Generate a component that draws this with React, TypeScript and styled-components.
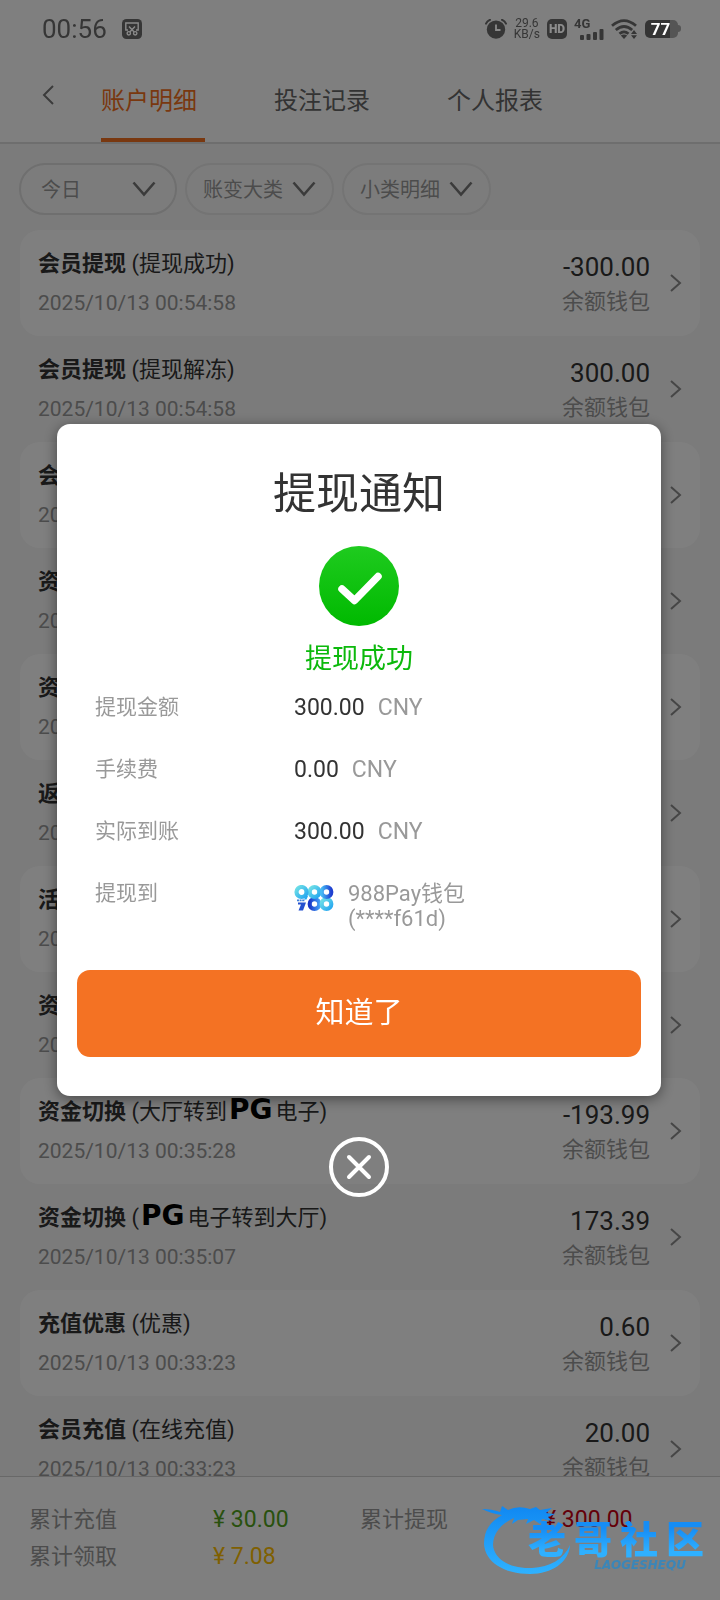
import React from "react";
import styled, { createGlobalStyle } from "styled-components";

const Global = createGlobalStyle`
  * { box-sizing: border-box; }
  body {
    margin: 0;
    background: #f7f7f7;
    font-family: Roboto, "Noto Sans CJK SC", sans-serif;
    color: #333;
  }
  button, select { font: inherit; color: inherit; }
  h2, p, ul, dl, dd { margin: 0; padding: 0; }
`;

const Page = styled.div`
  height: 100vh;
  display: flex;
  flex-direction: column;
  overflow: hidden;
`;

/* ---------- status bar ---------- */
const StatusBar = styled.header`
  position: relative;
  z-index: 3;
  flex: none;
  height: 57px;
  padding: 0 39px 0 42px;
  display: flex;
  align-items: center;
  gap: 7px;
  color: #363636;
`;
const Clock = styled.time`
  font-size: 26px;
  line-height: 30px;
  margin-right: 8px;
`;
const Spacer = styled.span`
  flex: 1;
`;
const Speed = styled.span`
  display: grid;
  justify-items: center;
  font-size: 12px;
  line-height: 11px;
`;
const Battery = styled.span`
  display: flex;
  align-items: center;
  justify-content: center;
  width: 33px;
  height: 18px;
  padding-right: 2px;
  border-radius: 5px;
  background: linear-gradient(90deg, #343434 77%, #555 77%);
  color: #fff;
  font-size: 17px;
  font-weight: 700;
  line-height: 18px;
`;
const BatteryCap = styled.i`
  width: 3px;
  height: 7px;
  margin-left: -7px;
  border-radius: 0 3px 3px 0;
  background: #555;
`;
const HdBox = styled.span`
  display: grid;
  place-items: center;
  width: 20px;
  height: 20px;
  border-radius: 5px;
  background: #363636;
  color: #8c8c8c;
  font-size: 12px;
  font-weight: 900;
  line-height: 20px;
`;
const Signal = styled.span`
  display: grid;
  width: 30px;
  height: 20px;
  font-size: 13px;
  font-weight: 700;
  line-height: 10px;
  svg { justify-self: end; }
`;

/* ---------- navigation ---------- */
const Nav = styled.nav`
  flex: none;
  display: flex;
  align-items: flex-start;
  padding-left: 36px;
  margin-top: -57px;
  padding-top: 57px;
  background: #fff;
  border-bottom: 2px solid #dcdcdc;
`;
const BackButton = styled.button`
  width: 65px;
  height: 76px;
  padding: 0 0 0 6px;
  border: 0;
  background: none;
  text-align: left;
  color: #777;
  svg { display: block; }
`;
const Tabs = styled.div`
  display: flex;
  gap: 69px;
`;
const Tab = styled.button<{ $active?: boolean }>`
  width: 104px;
  padding: 26px 0 19px;
  border: 0;
  border-bottom: 4px solid ${(p) => (p.$active ? "#f37021" : "transparent")};
  background: none;
  color: ${(p) => (p.$active ? "#f37021" : "#666")};
  font-size: 24px;
  line-height: 36px;
  text-align: left;
`;

/* ---------- filters ---------- */
const Filters = styled.div`
  flex: none;
  display: flex;
  gap: 8px;
  padding: 19px 19px 15px;
`;
const Chip = styled.label<{ $wide?: boolean }>`
  display: grid;
  align-items: center;
  width: ${(p) => (p.$wide ? 158 : 149)}px;
  height: 52px;
  border: 2px solid ${(p) => (p.$wide ? "#dedede" : "#e8e8e8")};
  border-radius: 26px;
  background: #f9f9f9;
  color: #999;
  > * { grid-area: 1 / 1; }
  select { padding-left: ${(p) => (p.$wide ? 20 : 16)}px; }
  svg {
    justify-self: end;
    margin-right: ${(p) => (p.$wide ? 19 : 16)}px;
    pointer-events: none;
  }
`;
const Select = styled.select`
  appearance: none;
  width: 100%;
  height: 100%;
  padding: 2px 0 0;
  border: 0;
  outline: 0;
  background: none;
  font-size: 20px;
`;

/* ---------- records ---------- */
const Records = styled.ul`
  flex: 1;
  min-height: 0;
  overflow-y: auto;
  scrollbar-width: none;
  padding: 0 20px;
  list-style: none;
`;
const Record = styled.li`
  border-radius: 20px;
  &:nth-child(odd) { background: #fff; }
`;
const RecordButton = styled.button`
  display: flex;
  align-items: center;
  width: 100%;
  height: 106px;
  padding: 0 18px;
  border: 0;
  background: none;
  text-align: left;
`;
const RecordMain = styled.span`
  flex: 1;
  display: grid;
  row-gap: 9px;
`;
const RecordTitle = styled.span`
  font-size: 22px;
  line-height: 30px;
  white-space: nowrap;
  b { font-weight: 700; }
`;
const RecordDate = styled.time`
  font-size: 21px;
  line-height: 30px;
  color: #999;
`;
const RecordSide = styled.span`
  display: grid;
  row-gap: 4px;
  justify-items: end;
  margin-right: 20px;
  padding-top: 2px;
`;
const Amount = styled.span`
  font-size: 26px;
  line-height: 32px;
`;
const Wallet = styled.span`
  font-size: 22px;
  line-height: 30px;
  color: #999;
`;
const PgMark = styled.span`
  margin: 0 3px 0 2px;
  font: 700 28px/20px "DejaVu Sans", sans-serif;
  color: #000;
`;

/* ---------- totals ---------- */
const Totals = styled.footer`
  flex: none;
  padding: 24px 29px 25px;
  border-top: 1px solid #d0d0d0;
  background: #fff;
`;
const TotalsGrid = styled.dl`
  display: grid;
  grid-template-columns: 1fr 1fr;
`;
const Total = styled.div`
  display: grid;
  grid-template-columns: 184fr 147fr;
  font-size: 22px;
  line-height: 37px;
  dt { color: #999; }
`;
const TotalValue = styled.dd<{ $color: string }>`
  font-size: 23px;
  color: ${(p) => p.$color};
`;

/* ---------- dialog ---------- */
const Backdrop = styled.div`
  position: fixed;
  inset: 0;
  z-index: 2;
  display: flex;
  flex-direction: column;
  align-items: center;
  justify-content: center;
  gap: 41px;
  padding: 20px 59px 0 57px;
  background: rgba(0, 0, 0, 0.5);
`;
const Dialog = styled.section`
  width: 100%;
  padding: 40px 20px 39px;
  border-radius: 13px;
  background: #fff;
  box-shadow: 0 3px 14px rgba(0, 0, 0, 0.45);
  text-align: center;
`;
const DialogTitle = styled.h2`
  font-size: 43px;
  font-weight: 400;
  line-height: 60px;
`;
const SuccessIcon = styled.svg`
  display: block;
  width: 80px;
  height: 80px;
  margin: 22px auto 13px;
`;
const SuccessText = styled.p`
  font-size: 27px;
  line-height: 40px;
  color: #0cb90c;
`;
const Details = styled.dl`
  display: grid;
  grid-template-columns: 199px 1fr;
  row-gap: 37px;
  margin-top: 16px;
  padding-left: 18px;
  font-size: 21px;
  line-height: 25px;
  text-align: left;
  color: #999;
`;
const Money = styled.dd`
  display: flex;
  gap: 13px;
  font-size: 23px;
  b { font-weight: 400; color: #333; }
`;
const Account = styled.dd`
  display: flex;
  gap: 14px;
  font-size: 22px;
  svg { margin-top: 4px; }
`;
const ConfirmButton = styled.button`
  width: 100%;
  height: 87px;
  margin-top: 39px;
  padding: 0 0 6px;
  border: 0;
  border-radius: 13px;
  background: #f47223;
  color: #fff;
  font-size: 29px;
`;
const CloseButton = styled.button`
  display: grid;
  place-items: center;
  width: 60px;
  height: 60px;
  padding: 0;
  border: 4px solid #fff;
  border-radius: 50%;
  background: none;
  color: #fff;
`;

/* ---------- community badge ---------- */
const Watermark = styled.div`
  position: fixed;
  right: 12px;
  bottom: 22px;
  z-index: 4;
  width: 228px;
  height: 76px;
  pointer-events: none;
`;
const WatermarkArt = styled.svg`
  position: absolute;
  inset: 0;
`;
const WatermarkText = styled.div`
  position: absolute;
  right: 4px;
  top: 19px;
  display: grid;
  justify-items: end;
`;
const WatermarkName = styled.strong`
  display: flex;
  gap: 8px;
  font-size: 38px;
  font-weight: 900;
  line-height: 38px;
  span {
    background: linear-gradient(#168df5 20%, #2fb0ff 80%);
    background-clip: text;
    color: transparent;
  }
`;
const WatermarkLatin = styled.small`
  padding-right: 18px;
  font: italic 700 12px/12px "DejaVu Sans", sans-serif;
  color: #3a86b8;
`;

type RecordData = {
  kind: string;
  note?: React.ReactNode;
  date: string;
  amount?: string;
};

const pg = <PgMark>PG</PgMark>;

const records: RecordData[] = [
  { kind: "会员提现", note: "(提现成功)", date: "2025/10/13 00:54:58", amount: "-300.00" },
  { kind: "会员提现", note: "(提现解冻)", date: "2025/10/13 00:54:58", amount: "300.00" },
  { kind: "会员提现", date: "2025/10/13" },
  { kind: "资金切换", date: "2025/10/13" },
  { kind: "资金切换", date: "2025/10/13" },
  { kind: "返水", date: "2025/10/13" },
  { kind: "活动", date: "2025/10/13" },
  { kind: "资金切换", date: "2025/10/13" },
  { kind: "资金切换", note: <>(大厅转到{pg}电子)</>, date: "2025/10/13 00:35:28", amount: "-193.99" },
  { kind: "资金切换", note: <>({pg}电子转到大厅)</>, date: "2025/10/13 00:35:07", amount: "173.39" },
  { kind: "充值优惠", note: "(优惠)", date: "2025/10/13 00:33:23", amount: "0.60" },
  { kind: "会员充值", note: "(在线充值)", date: "2025/10/13 00:33:23", amount: "20.00" },
];

const filters = ["今日", "账变大类", "小类明细"];

const totals = [
  { label: "累计充值", value: "30.00", color: "#52a31c" },
  { label: "累计提现", value: "300.00", color: "#c80012" },
  { label: "累计领取", value: "7.08", color: "#ffc000" },
];

const amounts = [
  { label: "提现金额", value: "300.00" },
  { label: "手续费", value: "0.00" },
  { label: "实际到账", value: "300.00" },
];

const ScreenshotIcon = () => (
  <svg width="20" height="20" viewBox="0 0 20 20" fill="none" stroke="#8a8a8a" strokeWidth="1.4">
    <rect width="20" height="20" rx="4.5" fill="#363636" stroke="none" />
    <path d="M6 11H3.8V4h12.4v7H14M7 7.5l5.2 5.6M13 7.5l-5.2 5.6" />
    <circle cx="6.8" cy="14.3" r="1.7" />
    <circle cx="13.2" cy="14.3" r="1.7" />
  </svg>
);

const AlarmIcon = () => (
  <svg width="22" height="20" viewBox="0 0 22 20" fill="none">
    <circle cx="11" cy="10.6" r="9.2" fill="#363636" />
    <path d="M1 4.6Q2.2 2 5 .8M21 4.6Q19.8 2 17 .8" stroke="#363636" strokeWidth="2" strokeLinecap="round" />
    <path d="M11 5.5v5.5h4.500" stroke="#8a8a8a" strokeWidth="1.8" />
  </svg>
);

const SignalBars = () => (
  <svg width="24" height="11" viewBox="0 0 24 11" fill="#363636">
    <rect x="0" y="6" width="4" height="5" rx="1" />
    <rect x="6.5" y="5" width="4" height="6" rx="1" />
    <rect x="13" y="3" width="4" height="8" rx="1" />
    <rect x="19.5" y="0" width="4" height="11" rx="1" />
  </svg>
);

const WifiIcon = () => (
  <svg width="27" height="20" viewBox="0 0 27 20" fill="none" stroke="#363636" strokeWidth="2.8">
    <path d="M1 6.800Q13 -3.500 25 6.800M4.800 11Q13 4 21.200 11M8.500 14.800Q13 11 17.500 14.800" />
    <path d="M9.8 16.5Q13 14.5 16.2 16.5L13 20Z" fill="#363636" stroke="none" />
    <path d="M20 15l3-4 3 4zM20 16.2l3 3.8 3-3.8z" fill="#363636" stroke="none" />
  </svg>
);

const DownIcon = () => (
  <svg width="24" height="16" viewBox="0 0 24 16" fill="none" stroke="#777" strokeWidth="2.6">
    <path d="M1.5 1.5L12 13.5L22.5 1.5" />
  </svg>
);

const RightIcon = () => (
  <svg width="12" height="20" viewBox="0 0 12 20" fill="none" stroke="#8c8c8c" strokeWidth="2">
    <path d="M1 2L10 10L1 18" />
  </svg>
);

const PayLogo = () => (
  <svg width="40" height="26" viewBox="0 0 40 26" fill="none">
    <defs>
      <linearGradient id="ringA" x1="0" y1="0" x2="1" y2="1">
        <stop offset="0" stopColor="#6fe0e6" />
        <stop offset="1" stopColor="#27a7f0" />
      </linearGradient>
      <linearGradient id="ringB" x1="0" y1="0" x2="1" y2="0">
        <stop offset="0" stopColor="#45baf5" />
        <stop offset="1" stopColor="#1f3fd0" />
      </linearGradient>
      <linearGradient id="ringC" x1="0" y1="0" x2="1" y2="0">
        <stop offset="0" stopColor="#1b38c8" />
        <stop offset="1" stopColor="#3f9cf5" />
      </linearGradient>
    </defs>
    <circle cx="20.500" cy="19" r="4.800" stroke="url(#ringC)" strokeWidth="4.200" />
    <circle cx="32.500" cy="19" r="4.800" stroke="url(#ringA)" strokeWidth="4.200" />
    <circle cx="20.500" cy="7" r="4.800" stroke="url(#ringA)" strokeWidth="4.200" />
    <circle cx="32.500" cy="7" r="4.800" stroke="url(#ringB)" strokeWidth="4.200" />
    <circle cx="7.500" cy="7" r="5" stroke="url(#ringA)" strokeWidth="4.200" />
    <path d="M3 15.300h8" stroke="#3f7fd8" strokeWidth="1.800" strokeDasharray="2 .6" />
    <path d="M14 11L12.500 14.500H10L12 11Z" fill="#27a7f0" />
    <path d="M12 17.500L9 25.500H4.500L7 19.500H4V17.500Z" fill="#2450cf" />
  </svg>
);

export default function App() {
  return (
    <>
      <Global />
      <Page>
        <StatusBar>
          <Clock>00:56</Clock>
          <ScreenshotIcon />
          <Spacer />
          <AlarmIcon />
          <Speed>
            <span>29.6</span>
            <span>KB/s</span>
          </Speed>
          <HdBox>HD</HdBox>
          <Signal>
            4G
            <SignalBars />
          </Signal>
          <WifiIcon />
          <Battery>77</Battery>
          <BatteryCap />
        </StatusBar>

        <Nav>
          <BackButton aria-label="返回">
            <svg width="13" height="20" viewBox="0 0 13 20" fill="none" stroke="currentColor" strokeWidth="2">
              <path d="M11 1L2 10L11 19" />
            </svg>
          </BackButton>
          <Tabs>
            <Tab $active>账户明细</Tab>
            <Tab>投注记录</Tab>
            <Tab>个人报表</Tab>
          </Tabs>
        </Nav>

        <Filters>
          {filters.map((name, i) => (
            <Chip key={name} $wide={i === 0}>
              <Select aria-label={name}>
                <option>{name}</option>
              </Select>
              <DownIcon />
            </Chip>
          ))}
        </Filters>

        <Records>
          {records.map((r, i) => (
            <Record key={i}>
              <RecordButton>
                <RecordMain>
                  <RecordTitle>
                    <b>{r.kind}</b> {r.note}
                  </RecordTitle>
                  <RecordDate>{r.date}</RecordDate>
                </RecordMain>
                {r.amount && (
                  <RecordSide>
                    <Amount>{r.amount}</Amount>
                    <Wallet>余额钱包</Wallet>
                  </RecordSide>
                )}
                <RightIcon />
              </RecordButton>
            </Record>
          ))}
        </Records>

        <Totals>
          <TotalsGrid>
            {totals.map((t) => (
              <Total key={t.label}>
                <dt>{t.label}</dt>
                <TotalValue $color={t.color}>¥ {t.value}</TotalValue>
              </Total>
            ))}
          </TotalsGrid>
        </Totals>
      </Page>

      <Backdrop>
        <Dialog role="dialog" aria-modal="true" aria-labelledby="notice-title">
          <DialogTitle id="notice-title">提现通知</DialogTitle>
          <SuccessIcon viewBox="0 0 80 80" fill="none">
            <defs>
              <linearGradient id="ok" x1="0" y1="0" x2="0" y2="1">
                <stop offset="0" stopColor="#1fcb1f" />
                <stop offset="1" stopColor="#00b900" />
              </linearGradient>
            </defs>
            <circle cx="40" cy="40" r="40" fill="url(#ok)" />
            <path d="M23 43L35.500 54.500L59 30.500" stroke="#fff" strokeWidth="7.500" strokeLinecap="round" strokeLinejoin="round" />
          </SuccessIcon>
          <SuccessText>提现成功</SuccessText>
          <Details>
            {amounts.map((a) => (
              <React.Fragment key={a.label}>
                <dt>{a.label}</dt>
                <Money>
                  <b>{a.value}</b>
                  <span>CNY</span>
                </Money>
              </React.Fragment>
            ))}
            <dt>提现到</dt>
            <Account>
              <PayLogo />
              <span>
                988Pay钱包
                <br />
                (****f61d)
              </span>
            </Account>
          </Details>
          <ConfirmButton>知道了</ConfirmButton>
        </Dialog>
        <CloseButton aria-label="关闭">
          <svg width="26" height="26" viewBox="0 0 26 26" stroke="currentColor" strokeWidth="4" strokeLinecap="round">
            <path d="M3 3L23 23M23 3L3 23" />
          </svg>
        </CloseButton>
      </Backdrop>

      <Watermark>
        <WatermarkArt width="228" height="76" viewBox="0 0 228 76" fill="none">
          <defs>
            <linearGradient id="swoosh" x1="0" y1="0" x2="0" y2="1">
              <stop offset="0" stopColor="#1088f2" />
              <stop offset="1" stopColor="#2fb2ff" />
            </linearGradient>
          </defs>
          <path
            d="M2 7Q12 7 20 10L22 4L28 8Q38 3 50 7L56 5L60 8L72 6L66 11L75 12L68 15L72 19L62 17L60 22L54 18L46 22L48 17L38 18L32 22L34 16C20 22 13 32 13 43C14 57 30 67 52 66C70 65 84 57 90 43C89 60 72 72 50 72C24 72 5 60 4 42C4 28 10 20 22 13Q12 12 2 7Z"
            fill="url(#swoosh)"
          />
        </WatermarkArt>
        <WatermarkText>
          <WatermarkName>
            <span>老</span>
            <span>哥</span>
            <span>社</span>
            <span>区</span>
          </WatermarkName>
          <WatermarkLatin>LAOGESHEQU</WatermarkLatin>
        </WatermarkText>
      </Watermark>
    </>
  );
}
